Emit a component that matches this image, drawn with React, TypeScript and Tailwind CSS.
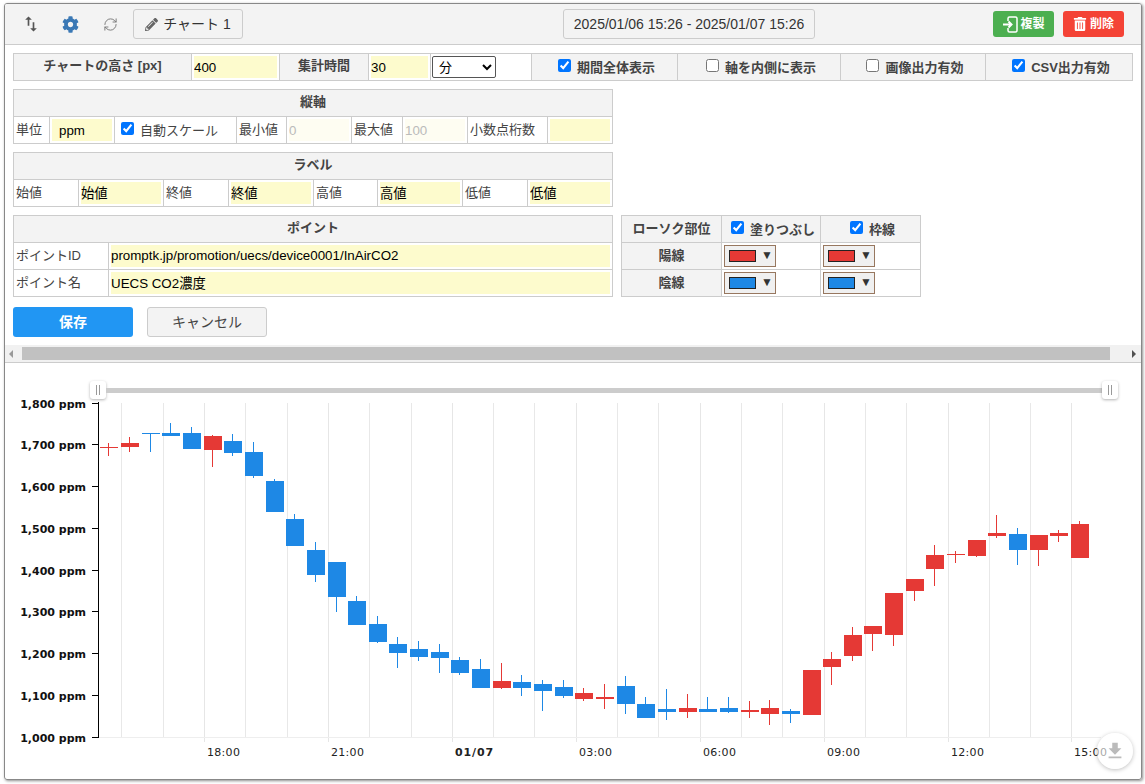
import { FaCog, FaPencilAlt, FaTrashAlt } from "react-icons/fa";
import { MdFileDownload, MdSwapVert } from "react-icons/md";
import { RefreshCw } from "lucide-react";
import type { ReactNode } from "react";

const RED = "#e53935";
const BLUE = "#1e88e5";

// wick x, body left, body top, body bottom, wick top, wick bottom, colour
const candles: [number, number, number, number, number, number, string][] = [
  [108, 100, 447, 448, 443, 456, RED],
  [129, 121, 443, 447, 437, 452, RED],
  [150, 142, 433, 434, 433, 452, BLUE],
  [170, 162, 433, 436, 423, 436, BLUE],
  [191, 183, 433, 449, 427, 449, BLUE],
  [212, 204, 436, 450, 435, 467, RED],
  [232, 224, 441, 453, 434, 456, BLUE],
  [253, 245, 452, 476, 442, 478, BLUE],
  [274, 266, 481, 512, 479, 512, BLUE],
  [294, 286, 519, 546, 514, 546, BLUE],
  [315, 307, 550, 575, 542, 582, BLUE],
  [336, 328, 562, 597, 562, 612, BLUE],
  [356, 348, 601, 625, 596, 625, BLUE],
  [377, 369, 624, 642, 616, 643, BLUE],
  [397, 389, 644, 653, 637, 668, BLUE],
  [418, 410, 649, 657, 641, 661, BLUE],
  [439, 431, 652, 658, 644, 673, BLUE],
  [459, 451, 660, 673, 657, 675, BLUE],
  [480, 472, 669, 688, 659, 688, BLUE],
  [501, 493, 681, 688, 663, 689, RED],
  [521, 513, 682, 688, 675, 696, BLUE],
  [542, 534, 684, 691, 680, 711, BLUE],
  [563, 555, 687, 696, 680, 698, BLUE],
  [583, 575, 693, 699, 688, 701, RED],
  [604, 596, 697, 699, 684, 709, RED],
  [625, 617, 686, 704, 676, 714, BLUE],
  [645, 637, 704, 718, 697, 718, BLUE],
  [666, 658, 709, 712, 689, 720, BLUE],
  [687, 679, 708, 712, 694, 718, RED],
  [707, 699, 709, 712, 697, 712, BLUE],
  [728, 720, 708, 712, 697, 713, BLUE],
  [749, 741, 710, 712, 701, 718, RED],
  [769, 761, 708, 714, 700, 725, RED],
  [790, 782, 711, 714, 709, 723, BLUE],
  [812, 803, 670, 715, 670, 715, RED],
  [831, 823, 659, 667, 652, 685, RED],
  [852, 844, 635, 656, 627, 661, RED],
  [872, 864, 626, 634, 626, 651, RED],
  [893, 885, 593, 635, 593, 646, RED],
  [914, 906, 579, 591, 579, 601, RED],
  [934, 926, 555, 569, 545, 586, RED],
  [955, 947, 554, 555, 551, 563, RED],
  [976, 968, 540, 556, 540, 557, RED],
  [996, 988, 533, 536, 515, 538, RED],
  [1017, 1009, 534, 550, 528, 565, BLUE],
  [1038, 1030, 535, 550, 535, 566, RED],
  [1058, 1050, 533, 536, 530, 542, RED],
  [1079, 1071, 524, 558, 521, 558, RED],
];

const minorGrid = [121, 163, 245, 287, 369, 411, 493, 534, 617, 658, 741, 782, 865, 906, 989, 1030];
const majorGrid = [204, 328, 452, 576, 700, 824, 948, 1071];
const yTicks = ["1,800", "1,700", "1,600", "1,500", "1,400", "1,300", "1,200", "1,100", "1,000"];
const xLabels = ["18:00", "21:00", "01/07", "03:00", "06:00", "09:00", "12:00", "15:00"];

function Th({ children, colSpan, className = "" }: { children?: ReactNode; colSpan?: number; className?: string }) {
  return (
    <th colSpan={colSpan} className={`h-[27px] border border-[#ccc] bg-[#f3f3f3] p-0 text-center font-bold text-[#444] ${className}`}>
      {children}
    </th>
  );
}

function Label({ children }: { children: ReactNode }) {
  return <td className="h-[27px] border border-[#ccc] py-0 pl-[2px] pr-0 text-[#444]">{children}</td>;
}

function Field({ value, className = "bg-[#fdfbcd] pb-[2px] pl-0 text-black" }: { value: string; className?: string }) {
  return (
    <td className="h-[27px] border border-[#ccc] p-[2px]">
      <input
        readOnly
        value={value}
        className={`block h-[22px] w-full min-w-0 text-[13.33px] outline-none ${className}`}
      />
    </td>
  );
}

function CheckLabel({ text, checked, className = "pl-[4px]" }: { text: string; checked: boolean; className?: string }) {
  return (
    <label className={`inline-flex items-center justify-center gap-[6px] ${className}`}>
      <input type="checkbox" readOnly checked={checked} className="m-0 mb-[2px] h-[13px] w-[13px]" />
      <span className="mt-[2px]">{text}</span>
    </label>
  );
}

function ColorButton({ color }: { color: string }) {
  return (
    <td className="h-[27px] border border-[#ccc] p-[2px]">
      <div className="flex h-[22px] w-[52px] items-start border border-[#97775f] bg-[#f0f0f0] pl-[4px] pt-[4px]">
        <div className="h-[12px] w-[27px] border border-[#222]" style={{ backgroundColor: color }} />
        <span className="ml-[5px] text-[12px] leading-[10px] text-[#333]">▼</span>
      </div>
    </td>
  );
}

function CopyIcon() {
  return (
    <svg width="17" height="17" viewBox="0 0 17 17" fill="none" stroke="white" strokeWidth="1.5">
      <path d="M6 5V2.5Q6 1 7.5 1h6Q15 1 15 2.5v12q0 1.5-1.5 1.5h-6Q6 16 6 14.500V12" />
      <path d="M1 8.500h8M6.500 5.500l3 3-3 3" strokeWidth="2" />
    </svg>
  );
}

function Chart() {
  return (
    <svg className="block" width="1135" height="417" viewBox="5 363 1135 417">
      {minorGrid.map((x) => (
        <rect key={x} x={x} y={403} width={1} height={334} fill="#e8e8e8" />
      ))}
      {majorGrid.map((x) => (
        <rect key={x} x={x} y={403} width={1} height={339} fill="#e6e6e6" />
      ))}
      <rect x={99} y={737} width={1002} height={1} fill="#eeeeee" />
      <rect x={98} y={402} width={1} height={336} fill="#000" />
      {yTicks.map((t, i) => {
        const y = Math.round(402.7 + i * 41.75);
        return (
          <g key={t}>
            <rect x={92} y={y} width={6} height={1} fill="#000" />
            <text x={86} y={y + 5} textAnchor="end" fontFamily="'DejaVu Sans', sans-serif" fontSize="11" fontWeight="700" fill="#111">
              {t} ppm
            </text>
          </g>
        );
      })}
      {xLabels.map((t, i) => (
        <text
          key={t}
          x={majorGrid[i] + 3}
          y={756}
          fontFamily="'DejaVu Sans', sans-serif"
          fontSize="11"
          letterSpacing={t === "01/07" ? "0.9" : "0.3"}
          fontWeight={t === "01/07" ? 700 : 400}
          fill="#222"
        >
          {t}
        </text>
      ))}
      {candles.map(([wx, left, top, bottom, wTop, wBot, color]) => (
        <g key={left} fill={color}>
          <rect x={wx} y={wTop} width={1} height={wBot - wTop} />
          <rect x={left} y={top} width={18} height={bottom - top} />
        </g>
      ))}
    </svg>
  );
}

function SliderHandle() {
  return (
    <div className="flex h-[18px] w-[16px] items-center justify-center gap-[2px] rounded-[3px] bg-white shadow-[0_1px_3px_rgba(0,0,0,0.3)]">
      <span className="h-[10px] w-[1px] bg-[#999]" />
      <span className="h-[10px] w-[1px] bg-[#999]" />
    </div>
  );
}

export default function App() {
  return (
    <div className="h-[784px] w-[1145px] overflow-hidden bg-white pl-[4px] pt-[3px] text-[13px] text-[#333] [font-family:'Liberation_Sans','Noto_Sans_CJK_JP',sans-serif]">
      <div className="flex h-[777px] w-[1138px] flex-col overflow-hidden rounded-[3px] border border-[#888] shadow-[1px_1px_3px_rgba(0,0,0,0.45)]">
        {/* ヘッダー */}
        <div className="flex h-[41px] shrink-0 items-center border-b border-[#ccc] bg-[#f3f3f3]">
          <MdSwapVert className="ml-[16px] text-[#555]" size={20} />
          <FaCog className="ml-[21px] text-[#3a78b5]" size={17} />
          <RefreshCw className="ml-[24px] text-[#777]" size={15} strokeWidth={1.5} />
          <button className="ml-[15px] flex h-[30px] w-[110px] items-center justify-center gap-[5px] rounded-[3px] border border-[#ccc] text-[14px] text-[#333]">
            <FaPencilAlt className="text-[#666]" size={13} />
            チャート 1
          </button>
          <button className="ml-[320px] h-[30px] w-[252px] rounded-[3px] border border-[#ccc] text-[14px] text-[#333]">
            2025/01/06 15:26 - 2025/01/07 15:26
          </button>
          <button className="ml-[178px] flex h-[26px] w-[61px] items-center justify-center gap-[1px] rounded-[3px] bg-[#4caf50] text-[12px] font-bold text-white">
            <CopyIcon />
            複製
          </button>
          <button className="ml-[9px] flex h-[26px] w-[61px] items-center justify-center gap-[3px] rounded-[3px] bg-[#f44336] text-[12px] font-bold text-white">
            <FaTrashAlt size={14} />
            削除
          </button>
        </div>

        {/* 設定 */}
        <div className="h-[300px] shrink-0 pl-[8px] pt-[8px]">
          <table className="w-[1119px] table-fixed border-collapse">
            <colgroup>
              <col className="w-[178px]" />
              <col className="w-[88px]" />
              <col className="w-[89px]" />
              <col className="w-[62px]" />
              <col className="w-[101px]" />
              <col className="w-[146px]" />
              <col className="w-[163px]" />
              <col className="w-[145px]" />
              <col className="w-[147px]" />
            </colgroup>
            <tbody>
              <tr>
                <Th className="pb-[2px]">チャートの高さ [px]</Th>
                <Field value="400" className="bg-[#fdfbcd] pl-0 text-black" />
                <Th className="pb-[2px]">集計時間</Th>
                <Field value="30" className="bg-[#fdfbcd] pl-0 text-black" />
                <td className="h-[27px] border border-[#ccc] py-0 pl-[1px] pr-0">
                  <select className="block h-[22px] w-[64px] rounded-[2px] border border-[#555] bg-white pl-[2px] text-[13px] text-black">
                    <option>分</option>
                  </select>
                </td>
                <Th><CheckLabel text="期間全体表示" checked /></Th>
                <Th><CheckLabel text="軸を内側に表示" checked={false} /></Th>
                <Th><CheckLabel text="画像出力有効" checked={false} /></Th>
                <Th><CheckLabel text="CSV出力有効" checked /></Th>
              </tr>
            </tbody>
          </table>

          <table className="mt-[8px] w-[599px] table-fixed border-collapse">
            <colgroup>
              <col className="w-[36px]" />
              <col className="w-[65px]" />
              <col className="w-[122px]" />
              <col className="w-[50px]" />
              <col className="w-[65px]" />
              <col className="w-[51px]" />
              <col className="w-[65px]" />
              <col className="w-[80px]" />
              <col className="w-[65px]" />
            </colgroup>
            <tbody>
              <tr><Th colSpan={9} className="pb-[2px]">縦軸</Th></tr>
              <tr>
                <Label>単位</Label>
                <Field value="ppm" className="bg-[#fdfbcd] pl-[7px] text-black" />
                <td className="h-[27px] border border-[#ccc] py-0 pl-[6px] pr-0 text-[#444]">
                  <CheckLabel text="自動スケール" checked className="pl-0" />
                </td>
                <Label>最小値</Label>
                <Field value="0" className="bg-[#fefdf2] pl-0 text-[#bbb]" />
                <Label>最大値</Label>
                <Field value="100" className="bg-[#fefdf2] pl-0 text-[#bbb]" />
                <Label>小数点桁数</Label>
                <Field value="" />
              </tr>
            </tbody>
          </table>

          <table className="mt-[8px] w-[599px] table-fixed border-collapse">
            <colgroup>
              <col className="w-[65px]" />
              <col className="w-[85px]" />
              <col className="w-[65px]" />
              <col className="w-[85px]" />
              <col className="w-[64px]" />
              <col className="w-[85px]" />
              <col className="w-[65px]" />
              <col className="w-[85px]" />
            </colgroup>
            <tbody>
              <tr><Th colSpan={8} className="pb-[2px]">ラベル</Th></tr>
              <tr>
                <Label>始値</Label>
                <Field value="始値" />
                <Label>終値</Label>
                <Field value="終値" />
                <Label>高値</Label>
                <Field value="高値" />
                <Label>低値</Label>
                <Field value="低値" />
              </tr>
            </tbody>
          </table>

          <div className="mt-[8px] flex items-start gap-[8px]">
            <table className="w-[599px] table-fixed border-collapse">
              <colgroup>
                <col className="w-[95px]" />
                <col className="w-[504px]" />
              </colgroup>
              <tbody>
                <tr><Th colSpan={2} className="pb-[2px]">ポイント</Th></tr>
                <tr>
                  <Label>ポイントID</Label>
                  <Field value="promptk.jp/promotion/uecs/device0001/InAirCO2" />
                </tr>
                <tr>
                  <Label>ポイント名</Label>
                  <Field value="UECS CO2濃度" />
                </tr>
              </tbody>
            </table>
            <table className="w-[299px] table-fixed border-collapse">
              <colgroup>
                <col className="w-[100px]" />
                <col className="w-[99px]" />
                <col className="w-[100px]" />
              </colgroup>
              <tbody>
                <tr>
                  <Th>ローソク部位</Th>
                  <Th><CheckLabel text="塗りつぶし" checked /></Th>
                  <Th><CheckLabel text="枠線" checked /></Th>
                </tr>
                <tr>
                  <Th>陽線</Th>
                  <ColorButton color={RED} />
                  <ColorButton color={RED} />
                </tr>
                <tr>
                  <Th>陰線</Th>
                  <ColorButton color={BLUE} />
                  <ColorButton color={BLUE} />
                </tr>
              </tbody>
            </table>
          </div>

          <div className="mt-[10px] flex gap-[14px]">
            <button className="h-[30px] w-[120px] rounded-[3px] bg-[#2196f3] text-[14px] font-bold text-white">保存</button>
            <button className="h-[30px] w-[120px] rounded-[3px] border border-[#ccc] bg-[#f3f3f3] text-[14px] text-[#444]">キャンセル</button>
          </div>
        </div>

        {/* スクロールバー */}
        <div className="flex h-[18px] shrink-0 items-center justify-between border-b border-[#ccc] bg-[#f1f1f1]">
          <span className="ml-[4px] h-0 w-0 border-y-[4px] border-r-[4px] border-y-transparent border-r-[#999]" />
          <div className="ml-[9px] mr-[22px] h-[13px] flex-1 bg-[#c1c1c1]" />
          <span className="mr-[5px] h-0 w-0 border-y-[4px] border-l-[4px] border-y-transparent border-l-[#505050]" />
        </div>

        {/* チャート */}
        <div className="relative flex-1">
          <Chart />
          <div className="absolute left-[85px] top-[18px] flex items-center">
            <SliderHandle />
            <div className="h-[5px] w-[996px] bg-[#ccc]" />
            <SliderHandle />
          </div>
          <button className="absolute left-[1092px] top-[370px] flex h-[36px] w-[36px] items-center justify-center rounded-full bg-white/60 shadow-[0_1px_4px_rgba(0,0,0,0.25)]">
            <MdFileDownload className="text-[#bbb]" size={22} />
          </button>
        </div>
      </div>
    </div>
  );
}
